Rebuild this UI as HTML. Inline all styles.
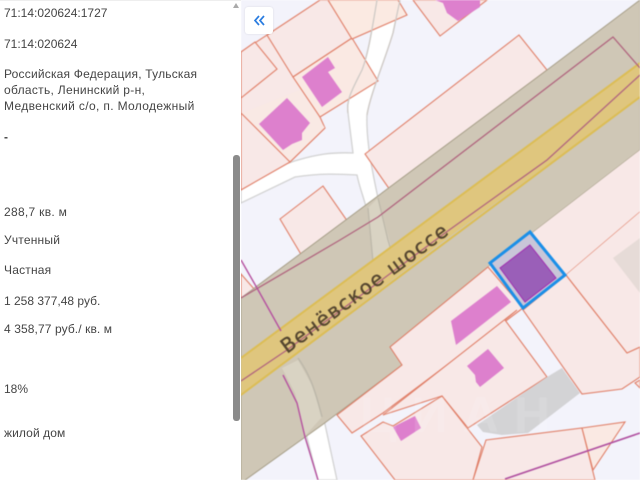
<!DOCTYPE html>
<html><head><meta charset="utf-8"><style>
html,body{margin:0;padding:0;width:640px;height:480px;overflow:hidden;background:#fff}
#s{position:absolute;left:0;top:0;width:241px;height:480px;background:#fff;filter:blur(.35px);border-top:1px solid #eee;box-sizing:border-box}
#s div{position:absolute;left:4px;font:12px/15px "Liberation Sans",sans-serif;color:#444;white-space:nowrap}
#m{position:absolute;left:0;top:0;filter:blur(.45px)}
#b{position:absolute;left:245px;top:7px;width:28px;height:27px;background:#fff;border-radius:3px;box-shadow:0 0 2px rgba(0,0,0,.1)}
#t{position:absolute;left:233px;top:155px;width:7px;height:266px;background:#8b8b8b;border-radius:3px}
#a{position:absolute;left:233px;top:3px;width:0;height:0;border:3.5px solid transparent;border-bottom:5px solid #aaa;border-top:0}
</style></head><body>
<svg id="m" width="640" height="480" viewBox="0 0 640 480">
<rect x="241" width="399" height="480" fill="#f3f3fb"/>
<g fill="#fff" stroke="#d2d2d2" stroke-width="1.3">
<path d="M377 0C372 30 368 55 362 70C352 90 346 100 348 113L353 153C330 152 315 155 298 160C280 165 262 174 241 182V203L295 177C320 173 340 174 357 175C360 190 365 200 368 215L388 210L378 198C372 170 366 140 367 115C370 95 385 60 393 33L400 0Z"/>
<path d="M305 430L318 480H337L323 415Z"/>
</g>
<g stroke="#e07f68" stroke-width="1.1" fill="#f8e8e7">
<path d="M241 52L267 35L320 117L325 128L290 162L241 190Z"/>
<path d="M241 113L290 162L325 128L300 90L250 110Z" fill="#f9e9e4" stroke="none"/>
<path d="M241 113L290 162L325 128" fill="none"/>
<path d="M267 35L320 0H328L352 38L293 77Z"/>
<path d="M293 77L352 38L378 81L320 117Z" fill="#fae9e3"/>
<path d="M328 0H398L407 15L352 39Z" fill="#fbeae2"/>
<path d="M241 52L255 42L277 69L241 98Z"/>
<path d="M413 0L440 36L487 0Z"/>
<path d="M365 154L519 35L547 70L390 190Z"/>
<path d="M280 219L323 186L348 222L302 256Z"/>
<path d="M241 274L255 290L241 301Z"/>
</g>
<path d="M377 0C372 30 368 55 362 70C352 90 346 100 348 113M400 0L393 33C385 60 370 95 367 115" stroke="#cfcac6" stroke-width="1.3" fill="none"/>
<path d="M241 298L547 70L640 0V150L488 267L390 347L402 365L322 425L241 483Z" fill="#cfc7b6" stroke="#a79f89" stroke-width="1"/>
<path d="M368 208L373 262L392 250L378 198Z" fill="#d9d3c3"/>
<path d="M368 208L373 262M378 198L388 240L391 250" stroke="#bdb8aa" stroke-width="1.3" fill="none"/>
<path d="M241 358L640 63V97L445 240L241 395Z" fill="#dfc67e"/>
<path d="M241 358L640 63M241 395L640 97" stroke="#dcbd55" stroke-width="2" fill="none"/>
<path d="M282 368L298 360L313 387L322 417L305 436L295 393Z" fill="#d9d3c3"/>
<path d="M298 358C308 372 314 385 322 417" stroke="#bdb8aa" stroke-width="1.5" fill="none"/>
<path d="M241 298L340 240L378 217L613 37L640 68" stroke="#b0647e" stroke-width="1.3" fill="none"/>
<path d="M241 381L287 350L445 233L547 160L640 75" stroke="#b0647e" stroke-width="1.3" fill="none"/>
<path d="M241 260L257 288L281 331M283 375L297 403L305 437L318 480" stroke="#b5519f" stroke-width="1.4" fill="none"/>
<g stroke="#e07f68" stroke-width="1.1" fill="#f8e8e7">
<path d="M640 150L488 267L523 310L566 275L640 212Z" stroke="none"/>
<path d="M566 275L640 212"/>
<path d="M566 275L627 353L640 347V377L622 389L582 394L523 310Z"/>
<path d="M566 275L640 212V347L627 353Z" stroke="none"/>
<path d="M566 275L627 353L640 347" fill="none"/>
<path d="M390 347L488 267L523 308L383 413L352 433L337 415L402 365Z"/>
<path d="M505 320L547 377L468 428L442 396L383 415L517 310Z"/>
<path d="M361 436L383 422L393 426L442 396L482 447L473 480H395Z"/>
<path d="M486 440L582 428L595 480H473Z"/>
<path d="M582 428L625 422L593 470Z" fill="#fae9e3"/>
<path d="M635 383L640 380V388Z"/>
</g>
<path d="M613 258L640 238V293Z" fill="#e6dbd7"/>
<path d="M562 368L580 393L528 433L502 435L483 432L477 425L547 377Z" fill="#d3d3d5"/>
<path d="M505 479L640 433" stroke="#b050a0" stroke-width="1.6" fill="none"/>
<g fill="#dd80cd">
<path d="M287 98L310 123L302 133V140L292 144L283 150L259 124Z"/>
<path d="M302 77L328 57L335 68L328 72L342 92L322 107Z"/>
<path d="M435 0H480V7L458 21L447 13L443 3Z"/>
<path d="M497 286L511 302L456 345L451 321Z"/>
<path d="M488 349L504 368L480 387L476 382L475 375L467 366Z"/>
<path d="M415 416L421 428L401 441L393 427Z"/>
</g>
<path d="M530 232L565 275L523 308L490 263Z" fill="#c9c6d8" stroke="#1a8fe8" stroke-width="3"/>
<path d="M530 245L556 278L525 302L500 268Z" fill="#9a5fb8" stroke="#a030b0" stroke-width="1"/>
<text transform="translate(287 354) rotate(-36.5)" font-family="DejaVu Sans" font-size="20" fill="#54452f" stroke="#54452f" stroke-width=".35" textLength="202">Венёвское шоссе</text>
<text x="360" y="432" font-family="Liberation Sans" font-size="50" font-weight="bold" fill="#fff" opacity=".12" textLength="190">ЦИАН</text>
</svg>
<div id="s">
<div style="top:5px">71:14:020624:1727</div>
<div style="top:36px">71:14:020624</div>
<div style="top:66px;letter-spacing:.2px">Российская Федерация, Тульская</div>
<div style="top:82px;letter-spacing:.3px">область, Ленинский р-н,</div>
<div style="top:98px;letter-spacing:.35px">Медвенский с/о, п. Молодежный</div>
<div style="top:129px;font-weight:bold">-</div>
<div style="top:204px;letter-spacing:.3px">288,7 кв. м</div>
<div style="top:232px;letter-spacing:.2px">Учтенный</div>
<div style="top:262px;letter-spacing:.2px">Частная</div>
<div style="top:293px">1 258 377,48 руб.</div>
<div style="top:321px;letter-spacing:.1px">4 358,77 руб./ кв. м</div>
<div style="top:381px">18%</div>
<div style="top:425px;letter-spacing:.1px">жилой дом</div>
</div>
<div id="a"></div><div id="t"></div>
<div id="b"><svg width="28" height="27"><path d="M14 9L10 13.5L14 18M19 9L15 13.5L19 18" fill="none" stroke="#2b7de0" stroke-width="1.7"/></svg></div>
</body></html>
